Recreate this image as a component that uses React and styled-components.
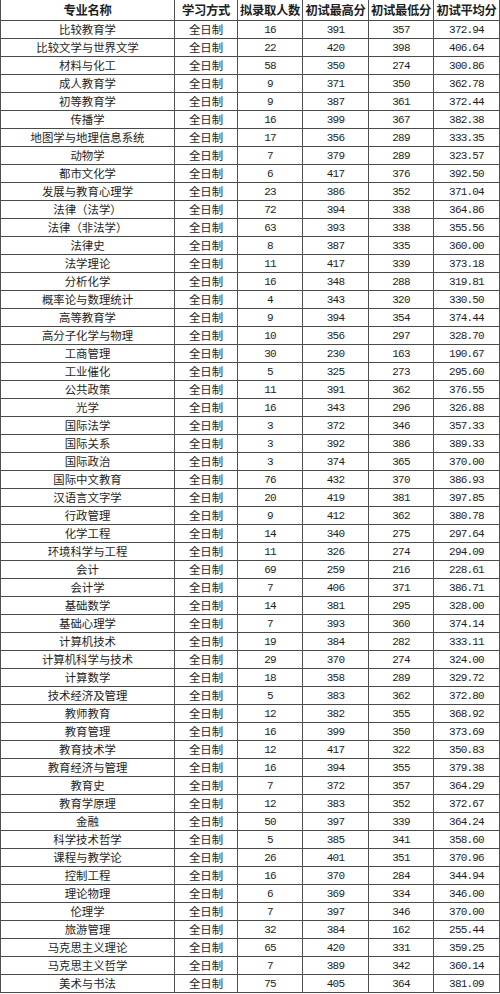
import React from "react";
import styled, { createGlobalStyle } from "styled-components";

const Global = createGlobalStyle`
  html, body { margin: 0; padding: 0; background: #fff; }
  body { width: 500px; height: 994px; overflow: hidden; }
`;

const rows = [
  ["比较教育学", 16, 391, 357, "372.94"],
  ["比较文学与世界文学", 22, 420, 398, "406.64"],
  ["材料与化工", 58, 350, 274, "300.86"],
  ["成人教育学", 9, 371, 350, "362.78"],
  ["初等教育学", 9, 387, 361, "372.44"],
  ["传播学", 16, 399, 367, "382.38"],
  ["地图学与地理信息系统", 17, 356, 289, "333.35"],
  ["动物学", 7, 379, 289, "323.57"],
  ["都市文化学", 6, 417, 376, "392.50"],
  ["发展与教育心理学", 23, 386, 352, "371.04"],
  ["法律（法学）", 72, 394, 338, "364.86"],
  ["法律（非法学）", 63, 393, 338, "355.56"],
  ["法律史", 8, 387, 335, "360.00"],
  ["法学理论", 11, 417, 339, "373.18"],
  ["分析化学", 16, 348, 288, "319.81"],
  ["概率论与数理统计", 4, 343, 320, "330.50"],
  ["高等教育学", 9, 394, 354, "374.44"],
  ["高分子化学与物理", 10, 356, 297, "328.70"],
  ["工商管理", 30, 230, 163, "190.67"],
  ["工业催化", 5, 325, 273, "295.60"],
  ["公共政策", 11, 391, 362, "376.55"],
  ["光学", 16, 343, 296, "326.88"],
  ["国际法学", 3, 372, 346, "357.33"],
  ["国际关系", 3, 392, 386, "389.33"],
  ["国际政治", 3, 374, 365, "370.00"],
  ["国际中文教育", 76, 432, 370, "386.93"],
  ["汉语言文字学", 20, 419, 381, "397.85"],
  ["行政管理", 9, 412, 362, "380.78"],
  ["化学工程", 14, 340, 275, "297.64"],
  ["环境科学与工程", 11, 326, 274, "294.09"],
  ["会计", 69, 259, 216, "228.61"],
  ["会计学", 7, 406, 371, "386.71"],
  ["基础数学", 14, 381, 295, "328.00"],
  ["基础心理学", 7, 393, 360, "374.14"],
  ["计算机技术", 19, 384, 282, "333.11"],
  ["计算机科学与技术", 29, 370, 274, "324.00"],
  ["计算数学", 18, 358, 289, "329.72"],
  ["技术经济及管理", 5, 383, 362, "372.80"],
  ["教师教育", 12, 382, 355, "368.92"],
  ["教育管理", 16, 399, 350, "373.69"],
  ["教育技术学", 12, 417, 322, "350.83"],
  ["教育经济与管理", 16, 394, 355, "379.38"],
  ["教育史", 7, 372, 357, "364.29"],
  ["教育学原理", 12, 383, 352, "372.67"],
  ["金融", 50, 397, 339, "364.24"],
  ["科学技术哲学", 5, 385, 341, "358.60"],
  ["课程与教学论", 26, 401, 351, "370.96"],
  ["控制工程", 16, 370, 284, "344.94"],
  ["理论物理", 6, 369, 334, "346.00"],
  ["伦理学", 7, 397, 346, "370.00"],
  ["旅游管理", 32, 384, 162, "255.44"],
  ["马克思主义理论", 65, 420, 331, "359.25"],
  ["马克思主义哲学", 7, 389, 342, "360.14"],
  ["美术与书法", 75, 405, 364, "381.09"],
];

const headers = ["专业名称", "学习方式", "拟录取人数", "初试最高分", "初试最低分", "初试平均分"];

const Table = styled.div`
  display: grid;
  grid-template-columns: 175px 63px 65px 66px 65px 66px;
  width: 500px;
  color: #1e1e1e;
`;

const Cell = styled.div`
  box-sizing: border-box;
  height: ${(p) => (p.$head ? 21 : 18)}px;
  display: flex;
  align-items: center;
  justify-content: center;
  white-space: nowrap;
  border-right: 1px solid #505050;
  border-bottom: 1px solid #4a4a4a;
  border-left: ${(p) => (p.$first ? "1px solid #505050" : "none")};
  font-family: ${(p) =>
    p.$num
      ? '"Liberation Mono", "DejaVu Sans Mono", monospace'
      : '"Noto Sans CJK SC", "Noto Sans", sans-serif'};
  font-size: ${(p) => (p.$head ? "12.3px" : p.$num ? "11px" : "11.4px")};
  font-weight: ${(p) => (p.$head ? 700 : 400)};
  letter-spacing: ${(p) => (p.$num ? "-0.8px" : p.$head ? "-0.3px" : "0")};
  padding-top: ${(p) => (p.$num ? "1px" : "0")};
  line-height: 1;
`;

export default function App() {
  return (
    <>
      <Global />
      <Table>
        {headers.map((h, i) => (
          <Cell key={h} $head $first={i === 0}>
            {h}
          </Cell>
        ))}
        {rows.map((r) => (
          <React.Fragment key={r[0]}>
            <Cell $first>{r[0]}</Cell>
            <Cell>全日制</Cell>
            <Cell $num>{r[1]}</Cell>
            <Cell $num>{r[2]}</Cell>
            <Cell $num>{r[3]}</Cell>
            <Cell $num>{r[4]}</Cell>
          </React.Fragment>
        ))}
      </Table>
    </>
  );
}
